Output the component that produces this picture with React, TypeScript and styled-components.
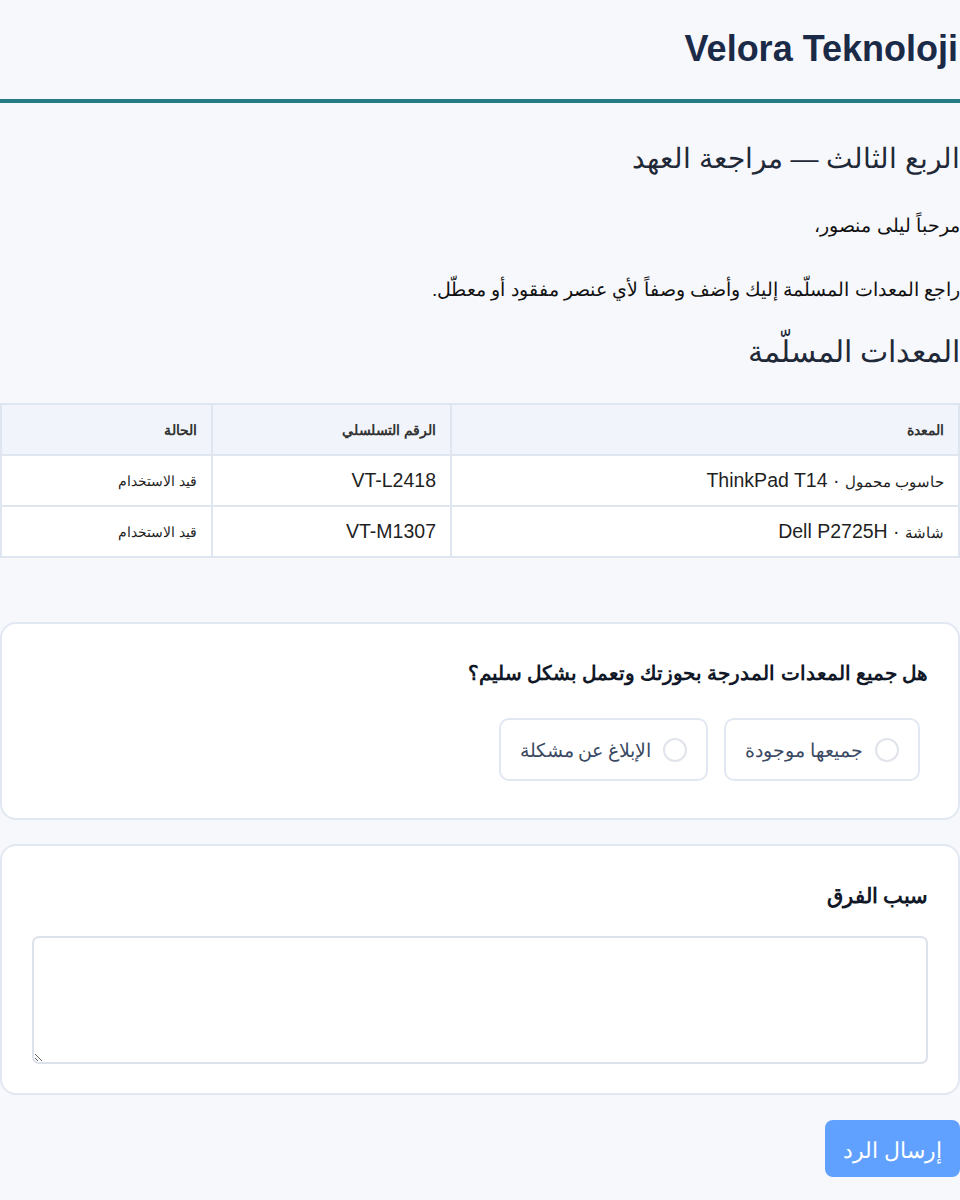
import React from "react";
import styled, { createGlobalStyle } from "styled-components";

const Global = createGlobalStyle`
  html, body { margin: 0; padding: 0; background: #f7f8fc; }
  body { font-family: "Liberation Sans", Arial, sans-serif; color: #1f2937; }
  * { box-sizing: border-box; }
`;

const Page = styled.div`
  direction: rtl;
  width: 960px;
  padding-bottom: 25px;
`;

const Header = styled.header`
  height: 103px;
  border-bottom: 4px solid #267c84;
  display: flex;
  align-items: center;
  padding-bottom: 2px;
`;

const Brand = styled.h1`
  margin: 0;
  direction: ltr;
  width: 100%;
  text-align: right;
  font-size: 36px;
  font-weight: 700;
  color: #1b2a47;
  padding-right: 2px;
`;

const Intro = styled.section`
  padding-top: 38px;
`;

const Title = styled.h2`
  margin: 0;
  font-size: 28px;
  font-weight: 400;
  color: #1f2937;
  line-height: 36px;
`;

const Para = styled.p<{ $top: number }>`
  margin: 0;
  font-size: 19px;
  line-height: 26px;
  color: #111;
  margin-top: ${(p) => p.$top}px;
`;

const SectionTitle = styled.h3`
  margin: 29px 0 0;
  font-size: 30px;
  font-weight: 400;
  color: #1f2937;
  line-height: 40px;
`;

const Table = styled.table`
  margin-top: 31px;
  width: 100%;
  border-collapse: collapse;
  background: #fff;
  border: 2px solid #dfe6f0;
`;

const Th = styled.th<{ $w?: string }>`
  background: #f1f5fb;
  border: 2px solid #dfe6f0;
  height: 51px;
  padding: 0 14px;
  text-align: right;
  font-size: 14px;
  font-weight: 700;
  color: #333;
  width: ${(p) => p.$w || "auto"};
`;

const Td = styled.td<{ $size?: number }>`
  border: 2px solid #dfe6f0;
  height: 51px;
  padding: 0 14px;
  text-align: right;
  font-size: ${(p) => p.$size || 19.5}px;
  color: #1f1f1f;
`;

const Small = styled.span`
  font-size: 15px;
`;

const Card = styled.div<{ $top: number; $bottom: number }>`
  margin-top: ${(p) => p.$top}px;
  background: #fff;
  border: 2px solid #e2e8f2;
  border-radius: 16px;
  padding: 34px 30px ${(p) => p.$bottom}px;
  font-family: "Noto Sans", sans-serif;
`;

const Question = styled.div`
  font-size: 20px;
  font-weight: 600;
  color: #111827;
  line-height: 30px;
`;

const Options = styled.div`
  display: flex;
  gap: 16px;
  margin-top: 30px;
  padding-right: 8px;
`;

const Option = styled.label`
  display: flex;
  align-items: center;
  gap: 12px;
  height: 63px;
  padding: 0 19px;
  border: 2px solid #e2e8f2;
  border-radius: 10px;
  font-size: 18.5px;
  color: #3b4a63;
  background: #fff;
`;

const Radio = styled.span`
  width: 24px;
  height: 24px;
  border-radius: 50%;
  border: 2px solid #e0e4ea;
  background: #fff;
`;

const Label = styled.div`
  font-size: 21px;
  font-weight: 600;
  color: #111827;
  line-height: 30px;
`;

const TextArea = styled.textarea`
  display: block;
  margin-top: 26px;
  width: 100%;
  height: 128px;
  border: 2px solid #dde2ea;
  border-radius: 7px;
  background: #fff;
  font-family: "Noto Sans", sans-serif;
  font-size: 16px;
  padding: 10px;
  outline: none;
`;

const Actions = styled.div`
  display: flex;
  margin-top: 25px;
`;

const Submit = styled.button`
  height: 57px;
  padding: 0 18px;
  border: none;
  border-radius: 8px;
  background: #60a1ff;
  color: #fff;
  font-family: "Noto Sans", sans-serif;
  font-size: 22px;
  white-space: nowrap;
`;

export default function App() {
  return (
    <>
      <Global />
      <Page>
        <Header>
          <Brand>Velora Teknoloji</Brand>
        </Header>
        <Intro>
          <Title>الربع الثالث — مراجعة العهد</Title>
          <Para $top={36}>مرحباً ليلى منصور،</Para>
          <Para $top={38}>راجع المعدات المسلّمة إليك وأضف وصفاً لأي عنصر مفقود أو معطّل.</Para>
          <SectionTitle>المعدات المسلّمة</SectionTitle>
        </Intro>
        <Table>
          <thead>
            <tr>
              <Th $w="508px">المعدة</Th>
              <Th $w="239px">الرقم التسلسلي</Th>
              <Th>الحالة</Th>
            </tr>
          </thead>
          <tbody>
            <tr>
              <Td><Small>حاسوب محمول</Small> · ThinkPad T14</Td>
              <Td>VT-L2418</Td>
              <Td $size={14}>قيد الاستخدام</Td>
            </tr>
            <tr>
              <Td><Small>شاشة</Small> · Dell P2725H</Td>
              <Td>VT-M1307</Td>
              <Td $size={14}>قيد الاستخدام</Td>
            </tr>
          </tbody>
        </Table>
        <Card $top={64} $bottom={37}>
          <Question>هل جميع المعدات المدرجة بحوزتك وتعمل بشكل سليم؟</Question>
          <Options>
            <Option><Radio />جميعها موجودة</Option>
            <Option><Radio />الإبلاغ عن مشكلة</Option>
          </Options>
        </Card>
        <Card $top={24} $bottom={29}>
          <Label>سبب الفرق</Label>
          <TextArea />
        </Card>
        <Actions>
          <Submit>إرسال الرد</Submit>
        </Actions>
      </Page>
    </>
  );
}
